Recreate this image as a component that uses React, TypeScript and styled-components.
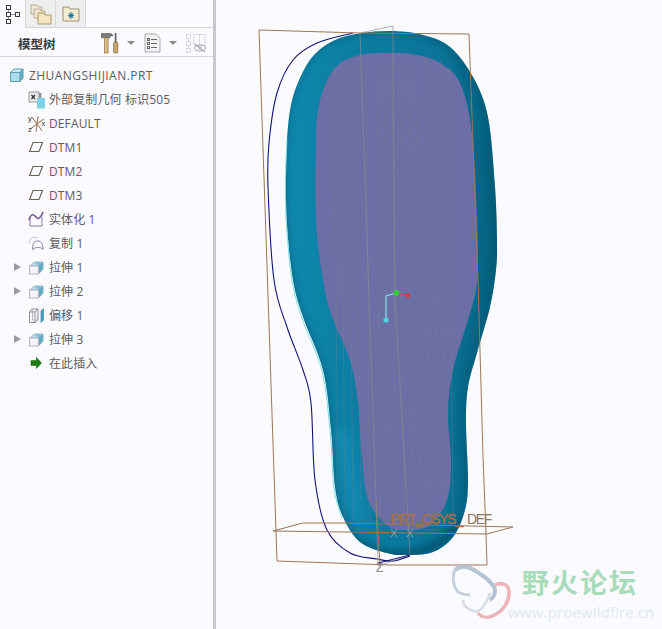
import React from "react";
import styled, { createGlobalStyle } from "styled-components";

const Global = createGlobalStyle`
  html, body { margin: 0; padding: 0; background: #fafaff; }
  #root { width: 662px; height: 629px; overflow: hidden; }
`;

const Page = styled.div`
  display: flex;
  width: 662px;
  height: 629px;
  overflow: hidden;
  background: #fafaff;
  font-family: "Open Sans", "Noto Sans CJK SC", sans-serif;
`;
const Sidebar = styled.aside`
  flex: 0 0 213px;
  display: flex;
  flex-direction: column;
  border-right: 3px solid #c9c9cd;
  background: #fafaff;
`;
const TabBar = styled.div`
  display: flex;
  height: 28px;
  box-sizing: border-box;
  border-bottom: 1px solid #d8d8da;
`;
const Tab = styled.div<{ $active?: boolean }>`
  width: ${(p) => (p.$active ? "26px" : "30px")};
  height: ${(p) => (p.$active ? "28px" : "27px")};
  box-sizing: border-box;
  display: flex;
  align-items: center;
  justify-content: center;
  background: ${(p) => (p.$active ? "#fafaff" : "#eeeeee")};
  border-right: 1px solid #d8d8da;
`;
const ToolRow = styled.div`
  display: flex;
  align-items: center;
  height: 29px;
  box-sizing: border-box;
  padding: 2px 0 0 18px;
  border-bottom: 1px solid #d6d6d8;
`;
const Title = styled.div`
  width: 83px;
  font-size: 12.5px;
  font-weight: 700;
  color: #3a3a3a;
  font-family: "Noto Sans CJK SC", sans-serif;
`;
const ToolSlot = styled.div<{ $w: number }>`
  width: ${(p) => p.$w}px;
  display: flex;
  align-items: center;
  justify-content: center;
`;
const Caret = styled.span`
  width: 0;
  height: 0;
  border-left: 4px solid transparent;
  border-right: 4px solid transparent;
  border-top: 4px solid #8b8b8b;
`;
const Tree = styled.ul`
  list-style: none;
  margin: 0;
  padding: 6px 0 0;
`;
const Row = styled.li<{ $root?: boolean }>`
  display: flex;
  align-items: center;
  height: 24px;
  padding-left: ${(p) => (p.$root ? "9px" : "14px")};
  font-size: 12px;
  letter-spacing: ${(p) => (p.$root ? "0.45px" : "0.12px")};
  color: #5c5c62;
  white-space: nowrap;
`;
const Expander = styled.span<{ $on?: boolean }>`
  flex: 0 0 7px;
  width: 0;
  height: 0;
  margin-right: 7px;
  box-sizing: border-box;
  border-top: 4.5px solid transparent;
  border-bottom: 4.5px solid transparent;
  border-left: 7px solid ${(p) => (p.$on ? "#9a9aa0" : "transparent")};
`;
const IconBox = styled.span`
  flex: 0 0 16px;
  min-width: 0;
  height: 16px;
  margin-right: 5px;
  display: flex;
  svg {
    flex: none;
  }
`;
const RootIconBox = styled(IconBox)`
  margin-right: 4px;
`;
const Canvas = styled.main`
  position: relative;
  flex: 1;
  min-width: 0;
`;
const Art = styled.svg`
  display: block;
  width: 446px;
  height: 629px;
`;
const Watermark = styled.div`
  position: absolute;
  left: 236px;
  top: 564px;
  width: 204px;
  height: 60px;
`;
const Butterfly = styled.svg`
  position: absolute;
  left: 0;
  top: 0;
`;
const Brand = styled.div`
  position: absolute;
  left: 70px;
  top: 0;
  font-family: "Noto Sans CJK SC", sans-serif;
  font-weight: 700;
  font-size: 27px;
  line-height: 36px;
  letter-spacing: 2px;
  white-space: nowrap;
  color: #a9dcba;
`;
const Url = styled.div`
  position: absolute;
  left: 56px;
  top: 38px;
  font-family: "Open Sans", sans-serif;
  font-size: 15.3px;
  line-height: 20px;
  white-space: nowrap;
  color: #dfeaf0;
`;

const Block = () => (
  <svg width="16" height="16" viewBox="0 0 16 16">
    <path d="M1.5 5.5 L5 2 H14 L11 5.5 Z" fill="#c8eaf4" stroke="#5f9db2" />
    <path d="M11 5.5 L14 2 V11 L11 14.5 Z" fill="#5fb4cc" stroke="#5a9fb4" />
    <rect x="1.5" y="5.5" width="9.5" height="9" fill="#a9dcec" stroke="#5f9db2" />
  </svg>
);
const Extrude = () => (
  <svg width="16" height="16" viewBox="0 0 16 16">
    <path d="M1.5 7 L6 3 H15 L10.5 7 Z" fill="#b5dde8" stroke="#a8c4ce" />
    <path d="M10.5 7 L15 3 V10 L10.5 15 Z" fill="#62a9c0" stroke="#7db2c4" />
    <rect x="1.5" y="7" width="9" height="8" fill="#f4f4f8" stroke="#b4b4bc" />
    <path d="M6 3 L10.5 7 L15 3 Z" fill="#86c0d2" />
  </svg>
);
const Datum = () => (
  <svg width="16" height="16" viewBox="0 0 16 16">
    <path d="M5 3.5 H14.5 L11 12.5 H1.5 Z" fill="none" stroke="#6e6250" strokeWidth="1.1" />
  </svg>
);
const ExternalCopy = () => (
  <svg width="17" height="18" viewBox="0 0 17 18">
    <rect x="1" y="1" width="10" height="10" fill="#e8e8e8" stroke="#9a9a9a" />
    <path d="M3.5 4 L7 8 M7 4 L3.5 8" stroke="#333" strokeWidth="1.2" />
    <rect x="9" y="7" width="8" height="10.5" fill="#7ed0e6" />
    <rect x="11" y="2" width="2.5" height="5" fill="#8a9aa8" />
  </svg>
);
const Csys = () => (
  <svg width="18" height="18" viewBox="0 0 18 18">
    <path d="M9 1 V17 M3 3 L15 15 M15 3 L3 15" stroke="#9a7a50" fill="none" strokeWidth="1" transform="rotate(8 9 9)" />
    <g fontFamily="'Liberation Sans', sans-serif" fontSize="7.5" fill="#333">
      <text x="0" y="6">y</text>
      <text x="0" y="17">z</text>
      <text x="13.5" y="11">x</text>
    </g>
  </svg>
);
const Solidify = () => (
  <svg width="16" height="16" viewBox="0 0 16 16">
    <path d="M2 15 V6 M14 15 H2 M14 15 V6" stroke="#8d7aa8" fill="none" />
    <path d="M1 9 C3 2 6 3 8 6 C10 9 13 7 15 1" stroke="#7b5a9b" strokeWidth="1.6" fill="none" />
  </svg>
);
const CopyIcon = () => (
  <svg width="16" height="16" viewBox="0 0 16 16">
    <path d="M1 9 C1 3 5 1 10 3" stroke="#c4c4cc" fill="none" />
    <path d="M5 15 C4 9 6 6 10 6 C14 6 15 10 15 15 M5 14 C8 12 12 12 15 14" stroke="#8d7ca8" fill="none" />
  </svg>
);
const Offset = () => (
  <svg width="16" height="16" viewBox="0 0 16 16">
    <path d="M1.5 5 L4 2 H10 V13 L7 15.5 H1.5 Z M7 15.5 V5 H1.5 M7 5 L10 2" fill="#f4f4f8" stroke="#8e8e98" />
    <path d="M4.5 3 V13 H9" fill="none" stroke="#b6b6c0" />
    <path d="M13 4 L15.5 1.5 V13 L13 15.5 Z" fill="#4aa0c0" stroke="#2a7ea0" strokeWidth="0.6" />
  </svg>
);
const Insert = () => (
  <svg width="16" height="16" viewBox="0 0 16 16">
    <path d="M3 5.5 H8.5 V2.5 L13.5 8 L8.5 13.5 V10.5 H3 Z" fill="#1f7d10" stroke="#155c0a" strokeWidth="0.5" />
  </svg>
);
const TreeTabIcon = () => (
  <svg width="16" height="24" viewBox="0 0 16 24">
    <g fill="none" stroke="#3a3a3a" strokeWidth="1">
      <rect x="1.5" y="3.5" width="4" height="4" />
      <rect x="1.5" y="10.5" width="4" height="4" />
      <rect x="10.5" y="10.5" width="4" height="4" />
      <rect x="1.5" y="17.5" width="4" height="4" />
    </g>
    <path d="M3.5 8 V10 M3.5 15 V17 M6 12.5 H10" stroke="#9a9a9a" fill="none" />
  </svg>
);
const FoldersIcon = () => (
  <svg width="22" height="22" viewBox="0 0 22 22">
    <path d="M1 2 H7 L8 4 H12 V11 H1 Z" fill="#f0eada" stroke="#b8ae92" />
    <path d="M4 6 H10 L11 8 H15 V15 H4 Z" fill="#f0e8d0" stroke="#b8ae92" />
    <path d="M8 10 H14 L15 12 H21 V21 H8 Z" fill="#f4e6be" stroke="#a8986c" />
  </svg>
);
const FolderStarIcon = () => (
  <svg width="18" height="16" viewBox="0 0 18 16">
    <path d="M1 1 H7 L8 3 H17 V15 H1 Z" fill="#f6ead0" stroke="#9c9278" />
    <path d="M9 6 V13 M6 9.5 H12 M6.8 7.3 L11.2 11.7 M11.2 7.3 L6.8 11.7" stroke="#1c7ea0" strokeWidth="1.1" />
  </svg>
);
const Tools = () => (
  <svg width="19" height="22" viewBox="0 0 19 22">
    <path d="M0.5 1 H9 C11 1 12.5 2 12.5 3.5 H9.5 V5.5 H0.5 Z" fill="#7c7c7c" stroke="#4e4e4e" strokeWidth="0.6" />
    <rect x="3.5" y="5.5" width="4" height="16" fill="#d8bc84" stroke="#8a7040" strokeWidth="0.7" />
    <rect x="14.5" y="0.5" width="1.8" height="10" fill="#5e5e68" />
    <rect x="13.3" y="10" width="4.4" height="11.5" rx="1.2" fill="#c8a868" stroke="#6a5a30" strokeWidth="0.7" />
  </svg>
);
const Sheet = () => (
  <svg width="17" height="20" viewBox="0 0 17 20">
    <path d="M1 1 H12 L16 5 V19 H1 Z" fill="#f2f2f4" stroke="#a8a8ae" />
    <g stroke="#666" fill="none">
      <rect x="3.5" y="5.5" width="2" height="2" />
      <rect x="3.5" y="9.5" width="2" height="2" />
      <rect x="3.5" y="13.5" width="2" height="2" />
      <path d="M7 6.5 H13 M7 10.5 H13 M7 14.5 H13" />
    </g>
  </svg>
);
const HiddenTree = () => (
  <svg width="22" height="20" viewBox="0 0 22 20">
    <g fill="none" stroke="#dadadc">
      <rect x="1.5" y="1.5" width="4" height="4" />
      <rect x="1.5" y="8.5" width="4" height="4" />
      <rect x="1.5" y="15.5" width="4" height="4" />
      <rect x="9" y="1.5" width="11" height="11" />
      <path d="M3.5 6 V8 M3.5 13 V15 M6 10 H9 M14.5 1.5 V12" />
    </g>
    <ellipse cx="15" cy="15" rx="5.5" ry="3" fill="none" stroke="#a8a8ac" />
    <path d="M10 11 L20 19" stroke="#8a8a8e" />
    <circle cx="15" cy="15" r="1.4" fill="#a8a8ac" />
  </svg>
);

type TreeItem = { label: string; icon: React.ReactNode; expand?: boolean };
const items: TreeItem[] = [
  { label: "外部复制几何 标识505", icon: <ExternalCopy /> },
  { label: "DEFAULT", icon: <Csys /> },
  { label: "DTM1", icon: <Datum /> },
  { label: "DTM2", icon: <Datum /> },
  { label: "DTM3", icon: <Datum /> },
  { label: "实体化 1", icon: <Solidify /> },
  { label: "复制 1", icon: <CopyIcon /> },
  { label: "拉伸 1", icon: <Extrude />, expand: true },
  { label: "拉伸 2", icon: <Extrude />, expand: true },
  { label: "偏移 1", icon: <Offset /> },
  { label: "拉伸 3", icon: <Extrude />, expand: true },
  { label: "在此插入", icon: <Insert /> },
];

// The drawing uses page coordinates, shifted by the width of the sidebar.
const OX = 216;
type P = [number, number];
function smooth(pts: P[], closed: boolean) {
  const n = pts.length;
  const at = (i: number) => (closed ? pts[(i + n) % n] : pts[Math.max(0, Math.min(n - 1, i))]);
  let d = `M${pts[0][0] - OX} ${pts[0][1]}`;
  const end = closed ? n : n - 1;
  for (let i = 0; i < end; i++) {
    const [p0, p1, p2, p3] = [at(i - 1), at(i), at(i + 1), at(i + 2)];
    const c1x = p1[0] + (p2[0] - p0[0]) / 6 - OX;
    const c1y = p1[1] + (p2[1] - p0[1]) / 6;
    const c2x = p2[0] - (p3[0] - p1[0]) / 6 - OX;
    const c2y = p2[1] - (p3[1] - p1[1]) / 6;
    d += ` C${c1x} ${c1y} ${c2x} ${c2y} ${p2[0] - OX} ${p2[1]}`;
  }
  return d + (closed ? " Z" : "");
}
const poly = (pts: P[]) => "M" + pts.map((p) => `${p[0] - OX} ${p[1]}`).join(" L");

const outerPts: P[] = [
  [393, 31], [362, 33], [335, 40], [314, 55], [300, 78], [291, 105], [287, 140], [286, 180], [287, 225], [293, 280], [303, 317],
  [323, 370], [331, 430], [335, 487], [343, 517], [360, 542], [387, 553], [407, 555], [433, 552],
  [453, 537], [465, 510], [468, 480], [466, 423], [468, 387], [477, 353], [490, 307], [496, 270],
  [497, 240], [495, 187], [488, 117], [473, 77], [450, 47], [423, 35],
];
const innerPts: P[] = [
  [393, 53], [360, 55], [338, 65], [325, 85], [318, 110], [316, 140], [316, 220], [323, 280], [332, 317],
  [350, 360], [358, 403], [362, 457], [368, 500], [387, 525], [407, 530], [430, 525], [447, 500],
  [451, 463], [448, 413], [453, 370], [467, 323], [477, 283], [477, 220], [472, 133], [460, 83],
  [440, 63], [417, 55],
];
const bluePts: P[] = [
  [353, 33], [317, 43], [293, 60], [277, 93], [269, 143], [268, 187], [274, 280], [287, 327],
  [303, 370], [311, 403], [315, 480], [327, 530], [350, 553], [377, 559], [393, 561], [410, 556],
];
const cyanPts: P[] = [
  [287, 140], [285.5, 180], [286.5, 225], [292, 280], [302, 318], [322, 371], [330, 430], [334, 488], [342, 518],
];

const outer = smooth(outerPts, true);
const inner = smooth(innerPts, true);

const gridXs = [334, 341, 349, 357, 366, 376, 384, 392, 400, 408, 416, 425, 433, 441, 449];

const Drawing = () => (
  <Art viewBox="0 0 446 629">
    <defs>
      <linearGradient id="body" x1="0" x2="1" y1="0" y2="0">
        <stop offset="0" stopColor="#0f88ad" />
        <stop offset="0.3" stopColor="#0b7ea3" />
        <stop offset="0.75" stopColor="#0a7397" />
        <stop offset="1" stopColor="#055f7e" />
      </linearGradient>
      <clipPath id="soleClip">
        <path d={outer} />
      </clipPath>
      <filter id="soft" x="-30%" y="-30%" width="160%" height="160%">
        <feGaussianBlur stdDeviation="3" />
      </filter>
      <filter id="softer" x="-60%" y="-30%" width="220%" height="160%">
        <feGaussianBlur stdDeviation="7" />
      </filter>
    </defs>
    <path d={outer} fill="url(#body)" />
    <g clipPath="url(#soleClip)">
      <path d="M118 430 L134 430 L150 530 L135 520 Z" fill="#22a6d2" opacity="0.4" filter="url(#softer)" />
      <path d={outer} fill="none" stroke="#05566f" strokeWidth="6" filter="url(#soft)" opacity="0.55" transform="translate(-2 -1)" />
      <path d="M130 535 C160 565 210 565 245 520" fill="none" stroke="#04506a" strokeWidth="9" filter="url(#soft)" opacity="0.6" />
    </g>
    <path d={inner} fill="#6c6fa6" />
    <g stroke="#80808c" strokeWidth="1" opacity="0.3">
      {gridXs.map((x, i) => (
        <path key={x} d={`M${x - OX} ${i % 2 ? 58 : 66} L${x + 4 - OX} ${i % 3 ? 522 : 500}`} />
      ))}
    </g>
    <path d={smooth(cyanPts, false)} fill="none" stroke="#7adfe2" strokeWidth="1" />
    <path d={smooth(bluePts, false)} fill="none" stroke="#14147c" strokeWidth="1.1" />
    <g fill="none" stroke="#9c7654" strokeWidth="1">
      <path d={poly([[259, 30], [360, 33], [469, 34], [478, 280], [483, 457], [486, 533], [487, 565], [390, 565], [277, 561], [259, 30]])} />
      <path d={poly([[273, 531], [303, 523], [343, 523], [513, 527], [487, 534], [273, 531]])} />
      <path d={poly([[376, 500], [380, 565]])} />
    </g>
    <g fill="none" stroke="#8e8e8e" strokeWidth="1" opacity="0.65">
      <path d={poly([[360, 33], [393, 26], [395, 300], [410, 555], [378, 566], [376, 500], [360, 33]])} />
    </g>
    <path d={poly([[410, 555], [378, 563]])} stroke="#14147c" fill="none" />
    <path d={poly([[386, 320], [386, 296], [396, 293]])} fill="none" stroke="#7fe0e6" strokeWidth="1.2" />
    <path d="M180 293 L192 295" stroke="#cc4040" strokeWidth="1.2" />
    <circle cx="170" cy="320" r="2.6" fill="#50d0e0" />
    <circle cx="180.5" cy="293" r="3" fill="#34c83c" />
    <circle cx="192" cy="295.5" r="2.2" fill="#d23c3c" />
    <path d="M175 529 L181 537 M181 529 L175 537 M191 529 L197 537 M197 529 L191 537" stroke="#a09c9c" fill="none" />
    <text x="175" y="524" fontFamily="'Liberation Sans', sans-serif" fontSize="14" letterSpacing="-1.15" fill="#a5714a">
      <tspan stroke="#a5714a" strokeWidth="0.45">PRT_CSYS_</tspan>
      <tspan x="251" letterSpacing="-1.3" fill="#8d7458">DEF</tspan>
    </text>
    <text x="160" y="572" fontFamily="'Liberation Sans', sans-serif" fontSize="12" fill="#8a8a8a">Z</text>
  </Art>
);

export default function App() {
  return (
    <Page>
      <Global />
      <Sidebar>
        <TabBar>
          <Tab $active><TreeTabIcon /></Tab>
          <Tab><FoldersIcon /></Tab>
          <Tab><FolderStarIcon /></Tab>
        </TabBar>
        <ToolRow>
          <Title>模型树</Title>
          <ToolSlot $w={18}><Tools /></ToolSlot>
          <ToolSlot $w={24}><Caret /></ToolSlot>
          <ToolSlot $w={18}><Sheet /></ToolSlot>
          <ToolSlot $w={24}><Caret /></ToolSlot>
          <ToolSlot $w={22}><HiddenTree /></ToolSlot>
        </ToolRow>
        <Tree>
          <Row $root>
            <RootIconBox><Block /></RootIconBox>
            ZHUANGSHIJIAN.PRT
          </Row>
          {items.map((it) => (
            <Row key={it.label}>
              <Expander $on={it.expand} />
              <IconBox>{it.icon}</IconBox>
              {it.label}
            </Row>
          ))}
        </Tree>
      </Sidebar>
      <Canvas>
        <Drawing />
        <Watermark>
          <Butterfly width="62" height="60" viewBox="0 0 62 60">
            <path d="M3 6 C8 2 15 2 22 6 C32 12 42 20 43 26 C43 30 41 34 38 36" fill="none" stroke="#b4c2d2" strokeWidth="4" />
            <path d="M3 6 C-1 14 2 26 8 29 C12 31 15 31 18 31" fill="none" stroke="#c6cfdc" strokeWidth="3" />
            <path d="M11 36 C11 42 16 46 25 48 C31 44 36 36 38 29" fill="none" stroke="#d6dce4" strokeWidth="2.5" />
            <path d="M43 21 C50 18 56 20 57 27 C58 36 52 46 44 50 C38 54 31 55 26 49" fill="none" stroke="#ecb4b8" strokeWidth="3.5" />
          </Butterfly>
          <Brand>野火论坛</Brand>
          <Url>www.proewildfire.cn</Url>
        </Watermark>
      </Canvas>
    </Page>
  );
}
